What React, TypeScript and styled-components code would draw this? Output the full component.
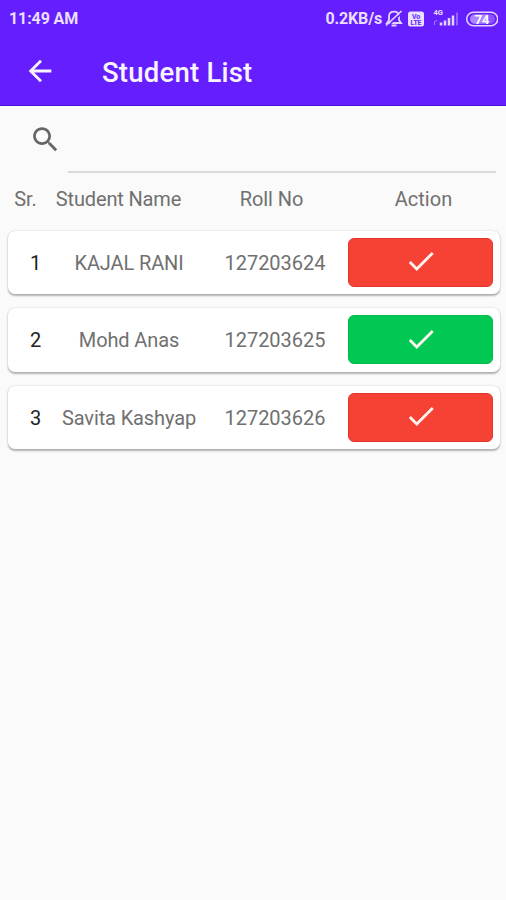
import React from "react";
import styled, { createGlobalStyle } from "styled-components";

const GlobalStyle = createGlobalStyle`
  * { box-sizing: border-box; }
  body { margin: 0; background: #fafafa; font-family: Roboto, "Liberation Sans", sans-serif; }
`;

const Screen = styled.div`
  width: 506px;
  height: 900px;
  overflow: hidden;
  background: #fafafa;
  color: #707070;
`;

const Header = styled.header`
  height: 106px;
  background: #651fff;
  color: #fff;
  border-bottom: 1px solid #4b12d8;
`;

const StatusBar = styled.div`
  height: 37px;
  padding: 0 8px 0 9px;
  display: flex;
  align-items: center;
  justify-content: space-between;
  font-size: 16px;
  font-weight: 700;
  color: #eadfff;
`;

const Clock = styled.span`
  letter-spacing: -0.1px;
`;

const StatusIcons = styled.div`
  display: flex;
  align-items: center;
  letter-spacing: -0.15px;
  svg { display: block; flex: none; }
`;

const Toolbar = styled.div`
  height: 67px;
  padding-left: 23px;
  display: flex;
  align-items: center;
  svg { flex: none; }
`;

const Title = styled.h1`
  margin: 4px 0 0 45px;
  font-size: 27.5px;
  line-height: 32px;
  font-weight: 500;
  letter-spacing: 0.22px;
  color: #f8f4ff;
`;

const SearchRow = styled.div`
  height: 67px;
  padding: 0 10px 0 29px;
  display: flex;
  svg { flex: none; margin-top: 17px; }
`;

const SearchField = styled.div`
  flex: 1;
  margin-left: 6px;
  border-bottom: 2px solid #dadada;
`;

const TableHeader = styled.div`
  height: 57.5px;
  padding: 0 7px 7.5px 9px;
  display: grid;
  grid-template-columns: 33px 153px 153px 151px;
  align-items: center;
  text-align: center;
  font-size: 20px;
`;

const List = styled.main`
  padding: 0 6px 0 8px;
  display: flex;
  flex-direction: column;
  gap: 14px;
`;

const Card = styled.article`
  height: 63.5px;
  padding: 0 7px 0 6px;
  border-radius: 7px;
  background: #fff;
  box-shadow: 0 1.5px 2px rgba(0, 0, 0, 0.28), 0 0 2px rgba(0, 0, 0, 0.15);
  display: grid;
  grid-template-columns: 42px 146px 146px 145px;
  align-items: center;
  text-align: center;
  font-size: 20px;
`;

const Index = styled.span`
  padding-left: 1px;
  padding-top: 1px;
  color: #222;
`;

const Cell = styled.span<{ $spacing?: number }>`
  padding-top: 1px;
  white-space: nowrap;
  letter-spacing: ${(p) => p.$spacing ?? 0}px;
`;

const ActionButton = styled.button<{ $present: boolean }>`
  height: 49px;
  padding: 0 0 2px;
  border: 1px solid ${(p) => (p.$present ? "#08b849" : "#e2352b")};
  border-radius: 6px;
  background: ${(p) => (p.$present ? "#00c853" : "#f54234")};
  display: flex;
  align-items: center;
  justify-content: center;
`;

const students = [
  { name: "KAJAL RANI", roll: "127203624", present: false },
  { name: "Mohd Anas", roll: "127203625", present: true },
  { name: "Savita Kashyap", roll: "127203626", present: false },
];

const BackIcon = () => (
  <svg width="34" height="34" viewBox="0 0 24 24" fill="#f8f4ff">
    <path d="M20 11H7.83l5.59-5.59L12 4l-8 8 8 8 1.41-1.41L7.83 13H20v-2z" />
  </svg>
);

const SearchIcon = () => (
  <svg width="33" height="33" viewBox="0 0 24 24" fill="#666">
    <path d="M15.5 14h-.79l-.28-.27C15.41 12.59 16 11.11 16 9.5 16 5.91 13.09 3 9.5 3S3 5.91 3 9.5 5.91 16 9.5 16c1.61 0 3.09-.59 4.23-1.57l.27.28v.79l5 4.99L20.49 19l-4.99-5zm-6 0C7.01 14 5 11.99 5 9.5S7.01 5 9.5 5 14 7.01 14 9.5 11.99 14 9.5 14z" />
  </svg>
);

const CheckIcon = () => (
  <svg width="34" height="34" viewBox="0 0 24 24" fill="#fff5f0">
    <path d="M9 16.17 4.83 12l-1.42 1.41L9 19 21 7l-1.41-1.41z" />
  </svg>
);

const SystemIcons = () => (
  <svg width="116" height="24" viewBox="382 6.5 116 24" fill="none" stroke="#e3d4ff">
    <path d="M387 22.5h14l-2-3v-3.5c0-3-2-4.800-5-4.800s-5 1.800-5 4.800v3.500zM391.500 25h5" strokeWidth="1.800" />
    <path d="M387.500 26l15.500-14.500" stroke="#651fff" strokeWidth="1.500" />
    <path d="M386 25l15.500-14.500" strokeWidth="1.700" />
    <rect x="408" y="11" width="16" height="15" rx="2.500" fill="#eadfff" stroke="none" />
    <g fill="#651fff" stroke="none" fontFamily="Roboto, sans-serif" fontWeight="700" fontSize="7" textAnchor="middle">
      <text x="416" y="18">Vo</text>
      <text x="416" y="24.500">LTE</text>
    </g>
    <text x="433.500" y="14.500" fill="#eadfff" stroke="none" fontFamily="Roboto, sans-serif" fontWeight="700" fontSize="7.500">4G</text>
    <path d="M434.500 24.500v-3.500l3-1" stroke="#a77bff" />
    <path d="M441 25v-3M445 25v-5M449 25v-7.500M453 25v-10" strokeWidth="2.500" />
    <path d="M457 25v-13" strokeWidth="2" stroke="#9562ff" />
    <rect x="466.700" y="11.700" width="31" height="13.600" rx="6.800" strokeWidth="1.500" />
    <path d="M474 13.800h14v9.500h-14q-4-1-4-4.750t4-4.750" fill="#ad84ff" stroke="none" />
    <path d="M488 13.800h3q4 1.500 4 4.750t-4 4.750h-3z" fill="#8a52ff" stroke="none" />
    <text x="482" y="23.200" fill="#fff" stroke="none" textAnchor="middle" fontFamily="Roboto, sans-serif" fontWeight="700" fontSize="13">74</text>
  </svg>
);

export default function App() {
  return (
    <Screen>
      <GlobalStyle />
      <Header>
        <StatusBar>
          <Clock>11:49 AM</Clock>
          <StatusIcons>
            <span>0.2KB/s</span>
            <SystemIcons />
          </StatusIcons>
        </StatusBar>
        <Toolbar>
          <BackIcon />
          <Title>Student List</Title>
        </Toolbar>
      </Header>
      <SearchRow>
        <SearchIcon />
        <SearchField />
      </SearchRow>
      <TableHeader>
        <Cell>Sr.</Cell>
        <Cell $spacing={-0.15}>Student Name</Cell>
        <Cell $spacing={-0.1}>Roll No</Cell>
        <Cell>Action</Cell>
      </TableHeader>
      <List>
        {students.map((s, i) => (
          <Card key={s.roll}>
            <Index>{i + 1}</Index>
            <Cell $spacing={-0.12}>{s.name}</Cell>
            <Cell>{s.roll}</Cell>
            <ActionButton $present={s.present}>
              <CheckIcon />
            </ActionButton>
          </Card>
        ))}
      </List>
    </Screen>
  );
}
